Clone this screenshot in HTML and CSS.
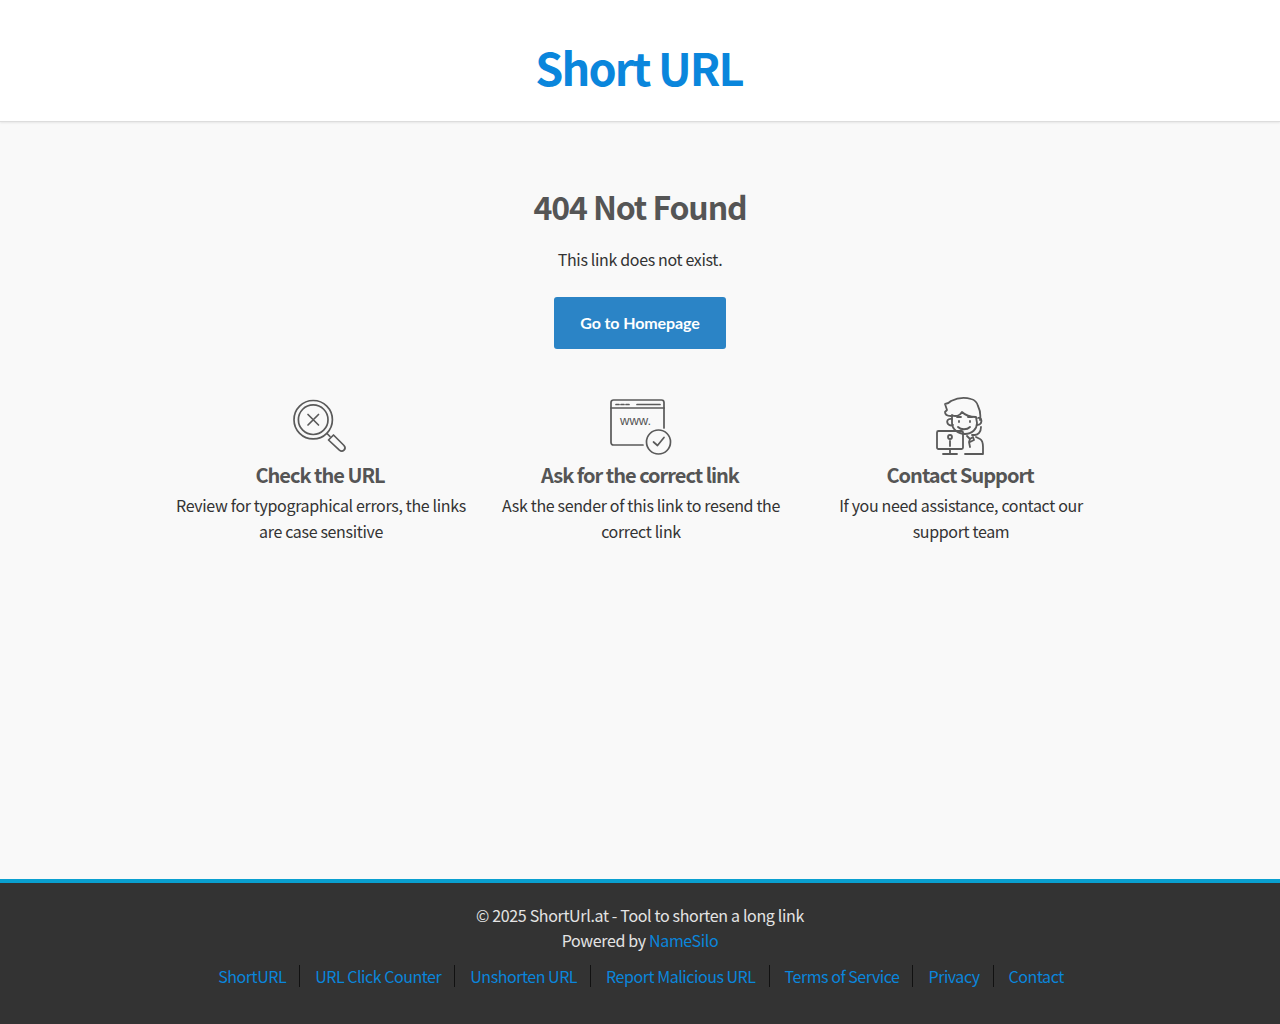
FILE: index.html
```html
<!DOCTYPE html>
<html lang="en">
<head>
    <meta charset="UTF-8">
    <meta name="viewport" content="width=device-width, initial-scale=1.0">
    <title>404 Not Found - Short URL</title>
    <link rel="stylesheet" href="styles.css">
</head>
<body>

    <header class="header">
        <a class="logo" href="#">Short URL</a>
    </header>

    <main class="main">
        <h1>404 Not Found</h1>
        <p class="lead">This link does not exist.</p>
        <a class="button" href="#">Go to Homepage</a>

        <div class="tips">
            <div class="tip">
                <svg class="tip-icon" width="60" height="60" viewBox="0 0 60 60" fill="none" stroke="#5a5a5a" stroke-width="1.7" stroke-linecap="round" stroke-linejoin="round">
                    <circle cx="23.200" cy="23.700" r="19.200"/>
                    <circle cx="23.200" cy="23.700" r="14.800"/>
                    <path d="M18 18.500l10.500 10.500M28.500 18.500L18 29"/>
                    <path d="M37 37.500l3 3"/>
                    <path d="M38.500 44l5-5 10.500 10.500c1.500 1.700 1.300 3.300 0 4.600-1.400 1.400-3 1.400-4.600 0z"/>
                </svg>
                <h3>Check the URL</h3>
                <p>Review for typographical errors, the links are case sensitive</p>
            </div>
            <div class="tip">
                <svg class="tip-icon" width="64" height="60" viewBox="0 0 64 60" fill="none" stroke="#5a5a5a" stroke-width="1.7" stroke-linecap="round" stroke-linejoin="round">
                    <path d="M35 49H5.500C4 49 3 48 3 46.500V6.500C3 5 4 4 5.500 4h48C55 4 56 5 56 6.500V32"/>
                    <path d="M3 12h53"/>
                    <path d="M8 8.500h3M13 8.500h3M18 8.500h3M29 8.500h23"/>
                    <circle cx="50.500" cy="46" r="12"/>
                    <path d="M45.500 46l4 3.500 6.500-8"/>
                    <text x="12" y="29" class="www">www.</text>
                </svg>
                <h3>Ask for the correct link</h3>
                <p>Ask the sender of this link to resend the correct link</p>
            </div>
            <div class="tip">
                <svg class="tip-icon" width="60" height="60" viewBox="0 0 60 60" fill="none" stroke="#5a5a5a" stroke-width="1.8" stroke-linecap="round" stroke-linejoin="round">
                    <path d="M21 20c-3 0-6-1-6-4l2-2-2-6c3 0 4-1 6-3 6-3 14-4 20-2 4 1 6 3 7 7 2 4 3 8 2 14"/>
                    <path d="M22 19c3 2 8 1 10-3 3 3 8 5 14 5l1 6c0 6-5 11-12 11-7 0-13-5-13-11z"/>
                    <path d="M22 23c-4-1-6 2-4 5 1 1 3 2 5 1M48 22c3-1 4 2 3 5-1 2-2 2-4 2"/>
                    <path d="M27 21h4M38 21h4M29 25v1M40 25v1M28 31c3 3 9 3 12 0"/>
                    <path d="M51 31c0 5-3 8-6 8h-3"/>
                    <rect x="7" y="35" width="26" height="18" rx="1.500"/>
                    <circle cx="20" cy="41" r="2"/>
                    <path d="M20 45v5M20 53v4M13 58h14"/>
                    <path d="M37 40l3 3-1 3 1 5M40 43l3-2 1 3-4 2M46 41l4 2c2 1 3 4 3 8v7H35"/>
                </svg>
                <h3>Contact Support</h3>
                <p>If you need assistance, contact our support team</p>
            </div>
        </div>
    </main>

    <footer class="footer">
        <div class="copy">© 2025 ShortUrl.at - Tool to shorten a long link</div>
        <div class="copy">Powered by <a href="#">NameSilo</a></div>
        <nav class="footer-links">
            <a href="#">ShortURL</a>
            <a href="#">URL Click Counter</a>
            <a href="#">Unshorten URL</a>
            <a href="#">Report Malicious URL</a>
            <a href="#">Terms of Service</a>
            <a href="#">Privacy</a>
            <a href="#">Contact</a>
        </nav>
    </footer>

</body>
</html>
```

FILE: styles.css
```css
* {
    box-sizing: border-box;
}
html, body {
    height: 100%;
}
body {
    margin: 0;
    display: flex;
    flex-direction: column;
    min-height: 1024px;
    font-family: "Noto Sans CJK JP", "Noto Sans", sans-serif;
    font-size: 16px;
    line-height: 26px;
    letter-spacing: -0.34px;
    color: #333;
    background-color: #f9f9f9;
}
a {
    color: #0a86dc;
    text-decoration: none;
}
.header {
    height: 122px;
    padding: 34px 2px 0 0;
    text-align: center;
    background-color: #fff;
    border-bottom: 1px solid #ddd;
    box-shadow: 0 1px 2px rgba(0, 0, 0, 0.08);
}
.logo {
    font-size: 45px;
    line-height: 66px;
    font-weight: 700;
    color: #0a86dc;
    letter-spacing: -1.85px;
}
.main {
    flex: 1;
    text-align: center;
    padding-top: 59px;
}
h1 {
    margin: 0;
    font-size: 32px;
    line-height: 50px;
    font-weight: 700;
    letter-spacing: -1.1px;
    color: #555;
}
.lead {
    margin: 15px 0 25px;
}
.button {
    display: inline-block;
    width: 172px;
    height: 52px;
    font-family: Lato, sans-serif;
    font-size: 16px;
    font-weight: 700;
    line-height: 52px;
    letter-spacing: -0.1px;
    color: #fff;
    background-color: #2b84c6;
    border-radius: 3px;
}
.tips {
    display: flex;
    justify-content: center;
    margin-top: 47px;
}
.tip {
    width: 320px;
    padding: 0 13px;
}
.tip-icon {
    display: block;
    margin: 0 auto;
}
.www {
    font-family: "Liberation Sans", sans-serif;
    font-size: 13px;
    letter-spacing: 0;
    fill: #555;
    stroke: none;
}
h3 {
    margin: 4px 0 2px;
    font-size: 20px;
    line-height: 30px;
    font-weight: 700;
    letter-spacing: -1px;
    color: #555;
}
.tip p {
    margin: 0;
    padding-left: 2px;
}
.footer {
    height: 145px;
    padding-top: 20px;
    text-align: center;
    color: #e4e4e4;
    background-color: #333;
    border-top: 4px solid #0aa0d0;
}
.copy {
    line-height: 25px;
}
.footer-links {
    display: flex;
    justify-content: center;
    margin-top: 12px;
    letter-spacing: -0.46px;
}
.footer-links a {
    padding: 0 13px 0 15px;
    line-height: 22px;
    border-right: 1px solid #111;
}
.footer-links a:last-child {
    border-right: none;
}
```
